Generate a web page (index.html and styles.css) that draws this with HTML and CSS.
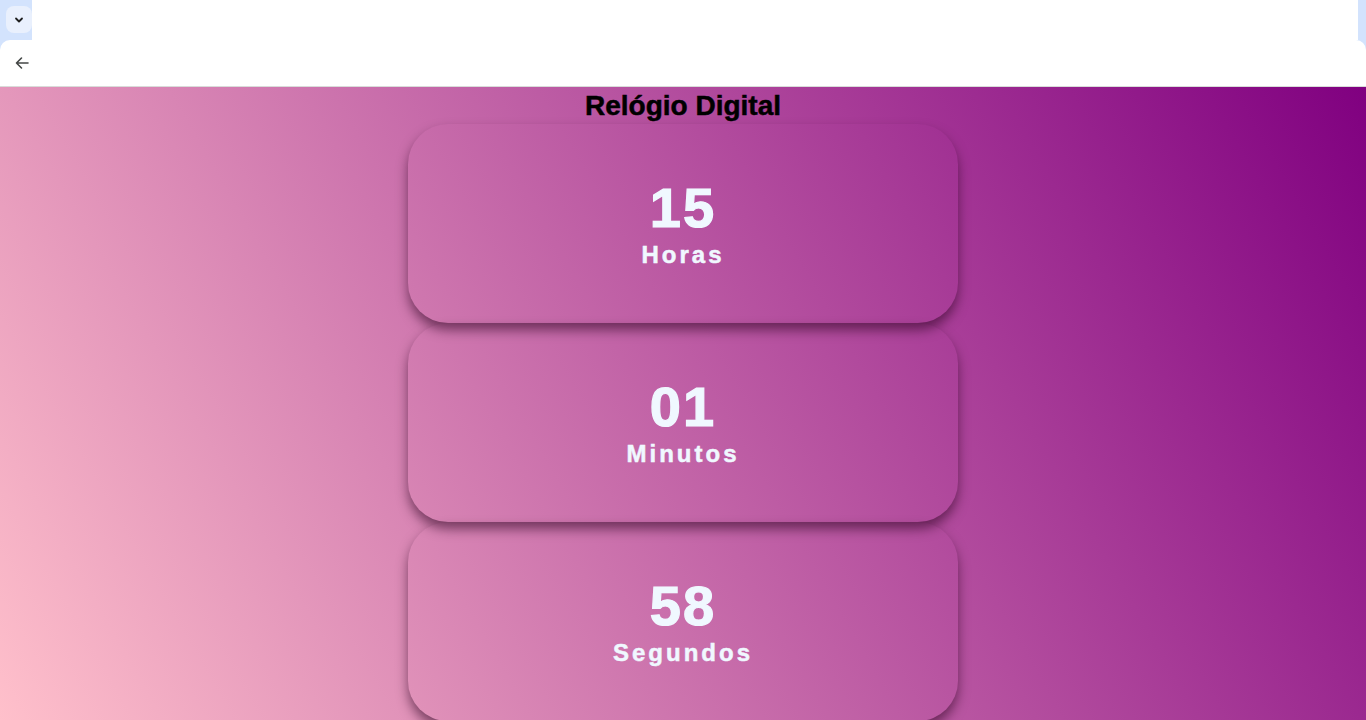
FILE: index.html
```html
<!DOCTYPE html>
<html lang="pt">
<head>
<meta charset="utf-8">
<title>Relógio Digital</title>
<link rel="stylesheet" href="styles.css">
</head>
<body>
<div class="chrome-top">
  <div class="tab-strip-left">
    <div class="menu-btn">
      <svg width="12" height="12" viewBox="0 0 12 12"><path d="M3 4.5 L6 7.5 L9 4.5" fill="none" stroke="#1f1f1f" stroke-width="1.8" stroke-linecap="round" stroke-linejoin="round"/></svg>
    </div>
  </div>
  <div class="tab-white"></div>
  <div class="tab-strip-right"></div>
</div>
<div class="toolbar">
  <svg class="back" width="16" height="16" viewBox="0 0 16 16"><path d="M14 8 H2.5 M7.5 3 L2.5 8 L7.5 13" fill="none" stroke="#444746" stroke-width="1.6" stroke-linecap="round" stroke-linejoin="round"/></svg>
</div>
<main class="page">
  <h1 class="title">Relógio Digital</h1>
  <section class="card">
    <div class="num">15</div>
    <div class="label">Horas</div>
  </section>
  <section class="card">
    <div class="num">01</div>
    <div class="label">Minutos</div>
  </section>
  <section class="card">
    <div class="num">58</div>
    <div class="label">Segundos</div>
  </section>
</main>
</body>
</html>
```
FILE: styles.css
```css
html, body {
  margin: 0;
  padding: 0;
  height: 100%;
  overflow: hidden;
}
body {
  display: flex;
  flex-direction: column;
  font-family: "Liberation Sans", Arial, sans-serif;
  background: #d3e3fd;
}
.chrome-top {
  height: 40px;
  display: flex;
  flex-shrink: 0;
}
.tab-strip-left {
  width: 32px;
  background: #d3e3fd;
  padding: 6px 0 0 6px;
  box-sizing: border-box;
}
.menu-btn {
  width: 26px;
  height: 27px;
  border-radius: 8px;
  background: #e9f0fd;
  display: flex;
  align-items: center;
  justify-content: center;
}
.tab-white {
  flex: 1;
  background: #ffffff;
}
.tab-strip-right {
  width: 8px;
  background: #d3e3fd;
}
.toolbar {
  height: 46px;
  flex-shrink: 0;
  background: #ffffff;
  border-radius: 10px 10px 0 0;
  border-bottom: 1px solid #d9dcd9;
  display: flex;
  align-items: center;
  padding-left: 14px;
}
.back {
  margin-top: -1px;
}
.page {
  flex: 1;
  display: flex;
  flex-direction: column;
  align-items: center;
  background: linear-gradient(60deg, #ffc0cb, #800080);
}
.title {
  margin: 0;
  font-size: 28px;
  line-height: 37px;
  font-weight: bold;
  color: #000;
  -webkit-text-stroke: 0.5px #000;
}
.card {
  flex-shrink: 0;
  width: 550px;
  height: 199px;
  border-radius: 40px;
  box-shadow: 0 7px 12px rgba(40, 0, 30, 0.55);
  display: flex;
  flex-direction: column;
  align-items: center;
  justify-content: center;
  color: #f0f8ff;
}
.num {
  font-size: 56px;
  line-height: 56px;
  font-weight: bold;
  letter-spacing: 2px;
  -webkit-text-stroke: 1.2px #f0f8ff;
}
.label {
  margin-top: 7px;
  font-size: 24px;
  line-height: 24px;
  font-weight: bold;
  letter-spacing: 3px;
  -webkit-text-stroke: 0.5px #f0f8ff;
}
```
